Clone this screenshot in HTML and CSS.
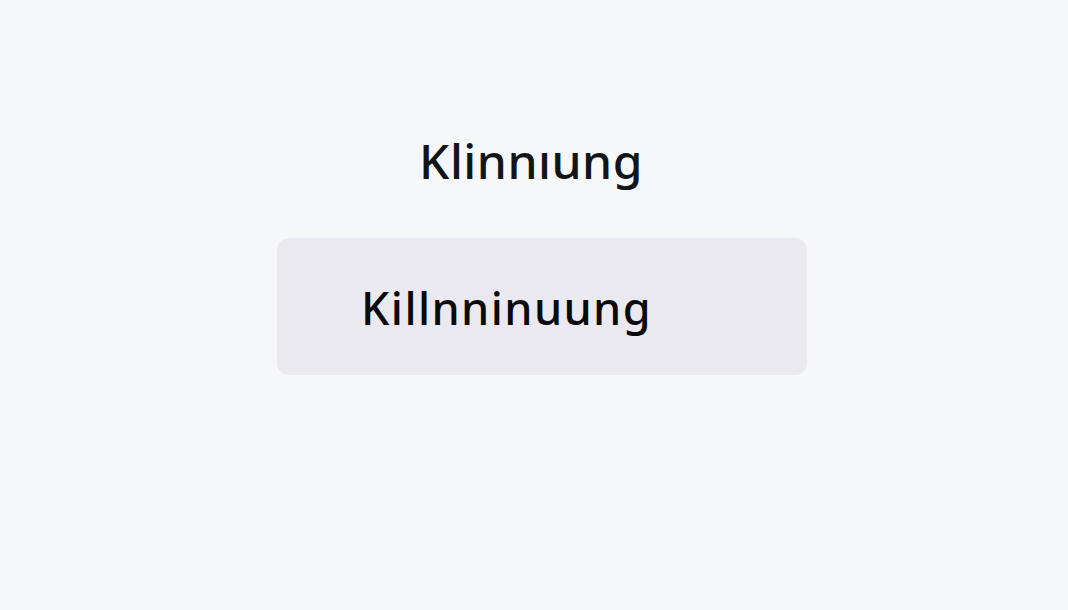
FILE: index.html
```html
<!DOCTYPE html>
<html lang="de">
<head>
<meta charset="utf-8">
<title>Klinnıung</title>
<link rel="stylesheet" href="styles.css">
</head>
<body>
<main class="stage">
  <h1 class="title">Klinnıung</h1>
  <div class="box">
    <span class="box-label">Killnninuung</span>
  </div>
</main>
</body>
</html>
```
FILE: styles.css
```css
html, body {
  margin: 0;
  padding: 0;
  height: 100%;
}
body {
  background: #f6f7f9;
  font-family: "Noto Sans", "Open Sans", "DejaVu Sans", sans-serif;
  color: #111418;
}
.stage {
  height: 610px;
  display: flex;
  flex-direction: column;
  align-items: center;
  padding-top: 128px;
  box-sizing: border-box;
}
.title {
  margin: 0 0 0 -6px;
  font-size: 48px;
  font-weight: 500;
  line-height: 66px;
  letter-spacing: 0.5px;
}
.box {
  margin-top: 44px;
  margin-left: 16px;
  width: 530px;
  height: 137px;
  box-sizing: border-box;
  background: #e9e9ef;
  border-radius: 12px;
  display: flex;
  align-items: center;
  padding-left: 84px;
  padding-top: 2px;
}
.box-label {
  font-size: 45px;
  font-weight: 500;
  letter-spacing: 1.4px;
  color: #0a0a0c;
}
```
